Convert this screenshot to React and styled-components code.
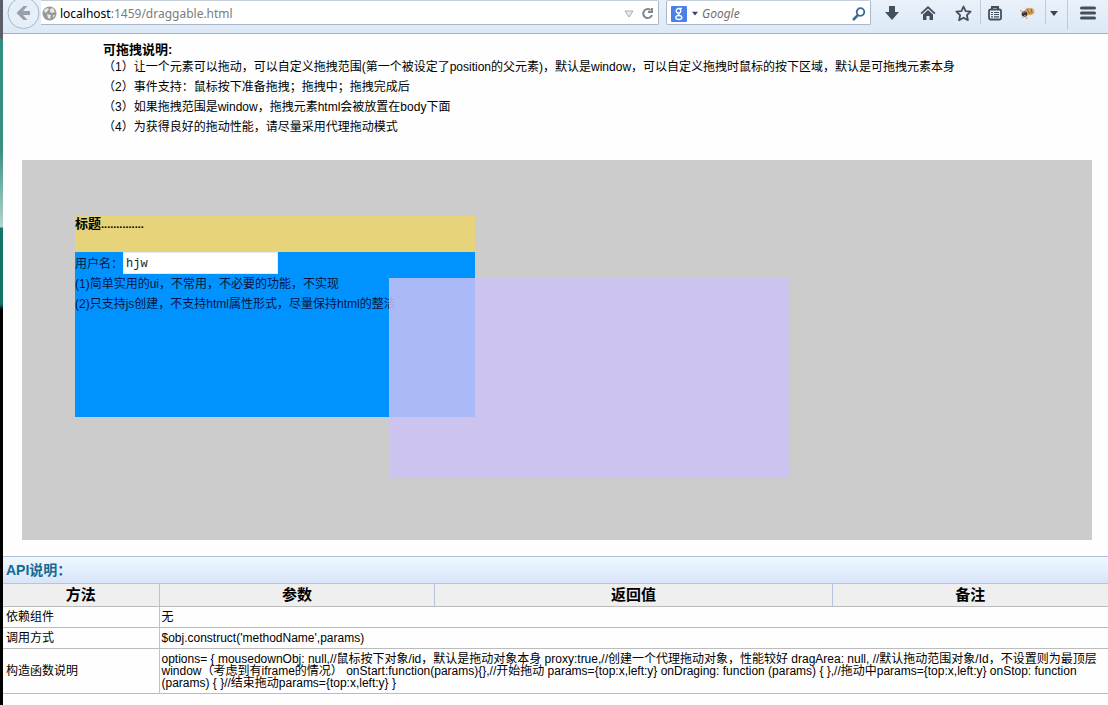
import React from "react";
import styled, { createGlobalStyle } from "styled-components";

const GlobalStyle = createGlobalStyle`
  * { box-sizing: border-box; }
  body {
    margin: 0;
    background: #fefefe;
    color: #000;
    font: 12px/20px "Liberation Sans", Arial, "Noto Sans CJK SC", sans-serif;
  }
`;

const Screen = styled.div`
  display: flex;
  min-height: 100vh;
`;

const DesktopEdge = styled.div`
  flex: none;
  width: 3px;
  background: linear-gradient(#5a5f68 0 38px, #2f8f7e 40px, #3a9080 150px, #b5d5cf 227px, #12756a 228px, #12756a 304px, #000 310px);
`;

const Browser = styled.div`
  flex: 1;
  min-width: 0;
`;

const Toolbar = styled.header`
  display: flex;
  align-items: flex-start;
  height: 34px;
  padding-left: 4px;
  border-bottom: 1px solid #a3b0c2;
  background: linear-gradient(#e9f1fa, #dde9f7);
`;

const BareButton = styled.button`
  display: flex;
  align-items: center;
  justify-content: center;
  flex: none;
  width: ${(p) => p.$width || 36}px;
  height: ${(p) => p.$height || 26}px;
  padding: 0;
  border: 0;
  background: none;
  color: #42505e;
`;

const Field = styled.div`
  display: flex;
  align-items: center;
  height: 25px;
  border: 1px solid #a9b7c9;
  border-top-color: #c3cedb;
  background: #fff;
`;

const AddressField = styled(Field)`
  flex: 1;
  min-width: 0;
  border-left: 0;
  border-radius: 0 2px 2px 0;
  padding: 2px 0 0 1px;
  font: 12px/20px "Noto Sans", "Open Sans", sans-serif;
  color: #7b7b7b;
`;

const Address = styled.a`
  flex: 1;
  margin-left: 3px;
  color: inherit;
  text-decoration: none;
  strong { font-weight: 400; color: #000; }
`;

const SearchField = styled(Field)`
  flex: none;
  width: 205px;
  margin: 0 3px 0 7px;
  padding: 2px 0 0 4px;
  border-radius: 2px;
`;

const SearchInput = styled.input`
  flex: 1;
  min-width: 0;
  padding: 0;
  border: 0;
  outline: 0;
  background: none;
  font: italic 12px/20px "Noto Sans", "Open Sans", sans-serif;
  &::placeholder { color: #707070; opacity: 1; }
`;

const Divider = styled.span`
  flex: none;
  width: 1px;
  height: ${(p) => p.$height}px;
  margin-left: ${(p) => p.$gap || 0}px;
  background: #bccadb;
`;

const Intro = styled.section`
  padding: 9px 16px 23px 100px;
`;

const IntroTitle = styled.h1`
  margin: 0;
  font-size: 13px;
  line-height: 14px;
`;

const IntroList = styled.ul`
  margin: 0;
  padding: 0;
  list-style: none;
`;

const Stage = styled.main`
  position: relative;
  height: 380px;
  margin: 0 16px 16px 19px;
  background: #ccc;
`;

const DragWindow = styled.section`
  position: absolute;
  left: 53px;
  top: 56px;
  width: 400px;
  height: 201px;
  background: #0093ff;
`;

const WindowTitle = styled.h2`
  height: 36px;
  margin: 0;
  background: #e6d37a;
  font-size: 13px;
  line-height: 16px;
`;

const Dots = styled.span`
  font-size: 11px;
`;

const NameRow = styled.div`
  display: flex;
  align-items: center;
  height: 22px;
`;

const NameInput = styled.input`
  width: 155px;
  height: 22px;
  padding: 3px 2px 1px;
  border: 1px solid #e4eaf0;
  background: #fff;
  color: #222;
  font: 12px/16px "Liberation Mono", monospace;
`;

const NameLabel = styled.label`
  width: 48px;
  padding-top: 2px;
  color: #0a1440;
  white-space: nowrap;
`;

const Line = styled.p`
  margin: 0;
  color: #0a1440;
`;

const DragProxy = styled.div`
  position: absolute;
  left: 367px;
  top: 118px;
  width: 400px;
  height: 200px;
  background: rgba(203, 194, 244, 0.83);
`;

const ApiTitle = styled.h2`
  height: 27px;
  margin: 0;
  padding-left: 3px;
  border-top: 1px solid #aebfd6;
  background: linear-gradient(#eef8ff, #e4eefc 50%, #d8e4f8);
  color: #156a92;
  font-size: 14px;
  line-height: 27px;
`;

const ApiTable = styled.table`
  width: 100%;
  border-collapse: collapse;
  table-layout: fixed;
  line-height: 12px;
  border-bottom: 1px solid #bcbcbc;
`;

const MethodCol = styled.col`
  width: 156px;
`;

const Col = styled.col`
  width: ${(p) => p.$share}%;
`;

const HeadCell = styled.th`
  height: 23px;
  padding: 0;
  border: 1px solid #b4c4e0;
  border-bottom-color: #bcbcbc;
  background: #efefef;
  font-size: 15px;
  line-height: 20px;
  &:first-child { border-left: 0; }
  &:last-child { border-right: 0; }
`;

const Cell = styled.td`
  height: ${(p) => p.$height || 21}px;
  padding: 0 3px;
  border-top: 1px solid #bcbcbc;
  & + & { padding: 0 2px; border-left: 1px solid #b4c4e0; }
`;

const BackIcon = () => (
  <svg width="34" height="30" viewBox="0 0 34 30">
    <circle cx="16.5" cy="13" r="15.5" fill="#e6eef8" stroke="#a9b7c9" />
    <path d="M9.500 13l7-7h4l-4.500 5h7v4h-7l4.500 5h-4z" fill="#97a1ab" />
  </svg>
);
const GlobeIcon = () => (
  <svg width="15" height="15" viewBox="0 0 15 15">
    <circle cx="7.500" cy="7.500" r="7" fill="#989898" />
    <path d="M2 4l3-2 2 1-2 3-2 1zM8 3l3-1 2 4-3 1-2-1zM5 8l4 1-1 4-2-1zM11 9l2 0-2 3z" fill="#e6e6e6" />
  </svg>
);
const DropIcon = () => (
  <svg width="10" height="8" viewBox="0 0 10 8"><path d="M1 1h8L5 7z" fill="#e8ebee" stroke="#a6adb5" /></svg>
);
const ReloadIcon = () => (
  <svg width="13" height="13" viewBox="0 0 13 13" fill="none" stroke="#7f868e" strokeWidth="2">
    <path d="M9.500 3A4.500 4.500 0 1 0 11 8" /><path d="M7 5h4V1" />
  </svg>
);
const EngineIcon = () => (
  <svg width="16" height="16" viewBox="0 0 16 16">
    <rect width="16" height="16" rx="1" fill="#4a80e8" />
    <g fill="none" stroke="#fff" strokeWidth="1.300">
      <ellipse cx="7.500" cy="4.800" rx="2.300" ry="2.300" />
      <path d="M8 2.300h3M8.500 7c-3 1 0 2 1 3" />
      <ellipse cx="7.800" cy="11.500" rx="3" ry="2" />
    </g>
  </svg>
);
const CaretIcon = ({ size = 7 }) => (
  <svg width={size} height="5" viewBox="0 0 8 5"><path d="M0 0h8L4 5z" fill="#3d4650" /></svg>
);
const LensIcon = () => (
  <svg width="14" height="14" viewBox="0 0 14 14" fill="none" stroke="#356a9c">
    <circle cx="8.500" cy="5" r="3.800" strokeWidth="1.800" /><path d="M6 8l-5 5" strokeWidth="2.500" />
  </svg>
);
const DownloadIcon = () => (
  <svg width="16" height="16" viewBox="0 0 16 16"><path d="M5 1h6v6h4l-7 8-7-8h4z" fill="currentColor" /></svg>
);
const HomeIcon = () => (
  <svg width="16" height="16" viewBox="0 0 16 16" fill="currentColor">
    <path d="M8 1l7.500 7-1.200 1.200L8 3.500 1.700 9.200.5 8z" />
    <path d="M8 5l5 4.500V15h-3.500v-4h-3v4H3V9.500z" />
  </svg>
);
const StarIcon = () => (
  <svg width="17" height="17" viewBox="0 0 17 17">
    <path d="M8.500 1.500l2.100 4.700 5 .5-3.700 3.500 1 5-4.400-2.500-4.400 2.500 1-5L1.400 6.700l5-.5z" fill="none" stroke="currentColor" strokeWidth="1.800" strokeLinejoin="round" />
  </svg>
);
const ListIcon = () => (
  <svg width="16" height="16" viewBox="0 0 16 16">
    <path d="M5 4V2h6v2" fill="none" stroke="currentColor" strokeWidth="2" />
    <rect x="2" y="4.500" width="12" height="10" rx="1.500" fill="none" stroke="currentColor" strokeWidth="1.800" />
    <path d="M4 7.500h2M7 7.500h5M4 9.500h2M7 9.500h5M4 11.800h2M7 11.800h5" stroke="currentColor" strokeWidth="1.200" />
  </svg>
);
const BugIcon = () => (
  <svg width="17" height="14" viewBox="0 0 17 14">
    <ellipse cx="10.500" cy="5.500" rx="5" ry="3.800" fill="#d9a762" />
    <path d="M8 3l3 5M12 3l1 4" stroke="#8a5f30" />
    <circle cx="5.500" cy="8" r="2.800" fill="#30353a" />
    <path d="M1 4l4 3M3 12l3-3 2 4" fill="none" stroke="#c78e55" />
    <circle cx="6" cy="6" r="1" fill="#c5522f" />
  </svg>
);
const MenuIcon = () => (
  <svg width="16" height="14" viewBox="0 0 16 14">
    <path d="M1.500 2h13M1.500 7h13M1.500 12h13" stroke="currentColor" strokeWidth="3" strokeLinecap="round" />
  </svg>
);

const notes = [
  "（1）让一个元素可以拖动，可以自定义拖拽范围(第一个被设定了position的父元素)，默认是window，可以自定义拖拽时鼠标的按下区域，默认是可拖拽元素本身",
  "（2）事件支持：鼠标按下准备拖拽；拖拽中；拖拽完成后",
  "（3）如果拖拽范围是window，拖拽元素html会被放置在body下面",
  "（4）为获得良好的拖动性能，请尽量采用代理拖动模式",
];

const optionsText =
  "options= { mousedownObj: null,//鼠标按下对象/id，默认是拖动对象本身 proxy:true,//创建一个代理拖动对象，性能较好 dragArea: null, //默认拖动范围对象/Id，不设置则为最顶层window（考虑到有iframe的情况） onStart:function(params){},//开始拖动 params={top:x,left:y} onDraging: function (params) { },//拖动中params={top:x,left:y} onStop: function (params) { }//结束拖动params={top:x,left:y} }";

export default function App() {
  return (
    <Screen>
      <GlobalStyle />
      <DesktopEdge />
      <Browser>
        <Toolbar>
          <BareButton $width={34} $height={30} aria-label="Back"><BackIcon /></BareButton>
          <AddressField>
            <GlobeIcon />
            <Address href="#"><strong>localhost</strong>:1459/draggable.html</Address>
            <BareButton $width={14} $height={22} aria-label="History"><DropIcon /></BareButton>
            <BareButton $width={22} $height={22} aria-label="Reload"><ReloadIcon /></BareButton>
          </AddressField>
          <SearchField>
            <EngineIcon />
            <BareButton $width={15} $height={22} aria-label="Search engine"><CaretIcon size={6} /></BareButton>
            <SearchInput aria-label="Search" placeholder="Google" />
            <BareButton $width={22} $height={22} aria-label="Search"><LensIcon /></BareButton>
          </SearchField>
          <BareButton aria-label="Downloads"><DownloadIcon /></BareButton>
          <BareButton aria-label="Home"><HomeIcon /></BareButton>
          <BareButton $width={34} aria-label="Bookmark"><StarIcon /></BareButton>
          <Divider $height={24} />
          <BareButton $width={28} aria-label="Bookmarks list"><ListIcon /></BareButton>
          <BareButton aria-label="Debugger"><BugIcon /></BareButton>
          <Divider $height={24} />
          <BareButton $width={16} aria-label="Debugger menu"><CaretIcon size={8} /></BareButton>
          <Divider $height={30} $gap={5} />
          <BareButton $width={40} aria-label="Menu"><MenuIcon /></BareButton>
        </Toolbar>
        <Intro>
          <IntroTitle>可拖拽说明:</IntroTitle>
          <IntroList>{notes.map((n) => <li key={n}>{n}</li>)}</IntroList>
        </Intro>
        <Stage>
          <DragWindow>
            <WindowTitle>标题<Dots>..............</Dots></WindowTitle>
            <NameRow>
              <NameLabel htmlFor="user-name">用户名：</NameLabel>
              <NameInput id="user-name" defaultValue="hjw" />
            </NameRow>
            <Line>(1)简单实用的ui，不常用，不必要的功能，不实现</Line>
            <Line>(2)只支持js创建，不支持html属性形式，尽量保持html的整洁</Line>
          </DragWindow>
          <DragProxy />
        </Stage>
        <ApiTitle>API说明：</ApiTitle>
        <ApiTable>
          <colgroup>
            <MethodCol />
            <Col $share={25} />
            <Col $share={36} />
            <Col $share={25} />
          </colgroup>
          <thead>
            <tr>
              <HeadCell>方法</HeadCell>
              <HeadCell>参数</HeadCell>
              <HeadCell>返回值</HeadCell>
              <HeadCell>备注</HeadCell>
            </tr>
          </thead>
          <tbody>
            <tr><Cell>依赖组件</Cell><Cell colSpan={3}>无</Cell></tr>
            <tr><Cell>调用方式</Cell><Cell colSpan={3}>$obj.construct('methodName',params)</Cell></tr>
            <tr><Cell $height={45}>构造函数说明</Cell><Cell colSpan={3}>{optionsText}</Cell></tr>
          </tbody>
        </ApiTable>
      </Browser>
    </Screen>
  );
}
